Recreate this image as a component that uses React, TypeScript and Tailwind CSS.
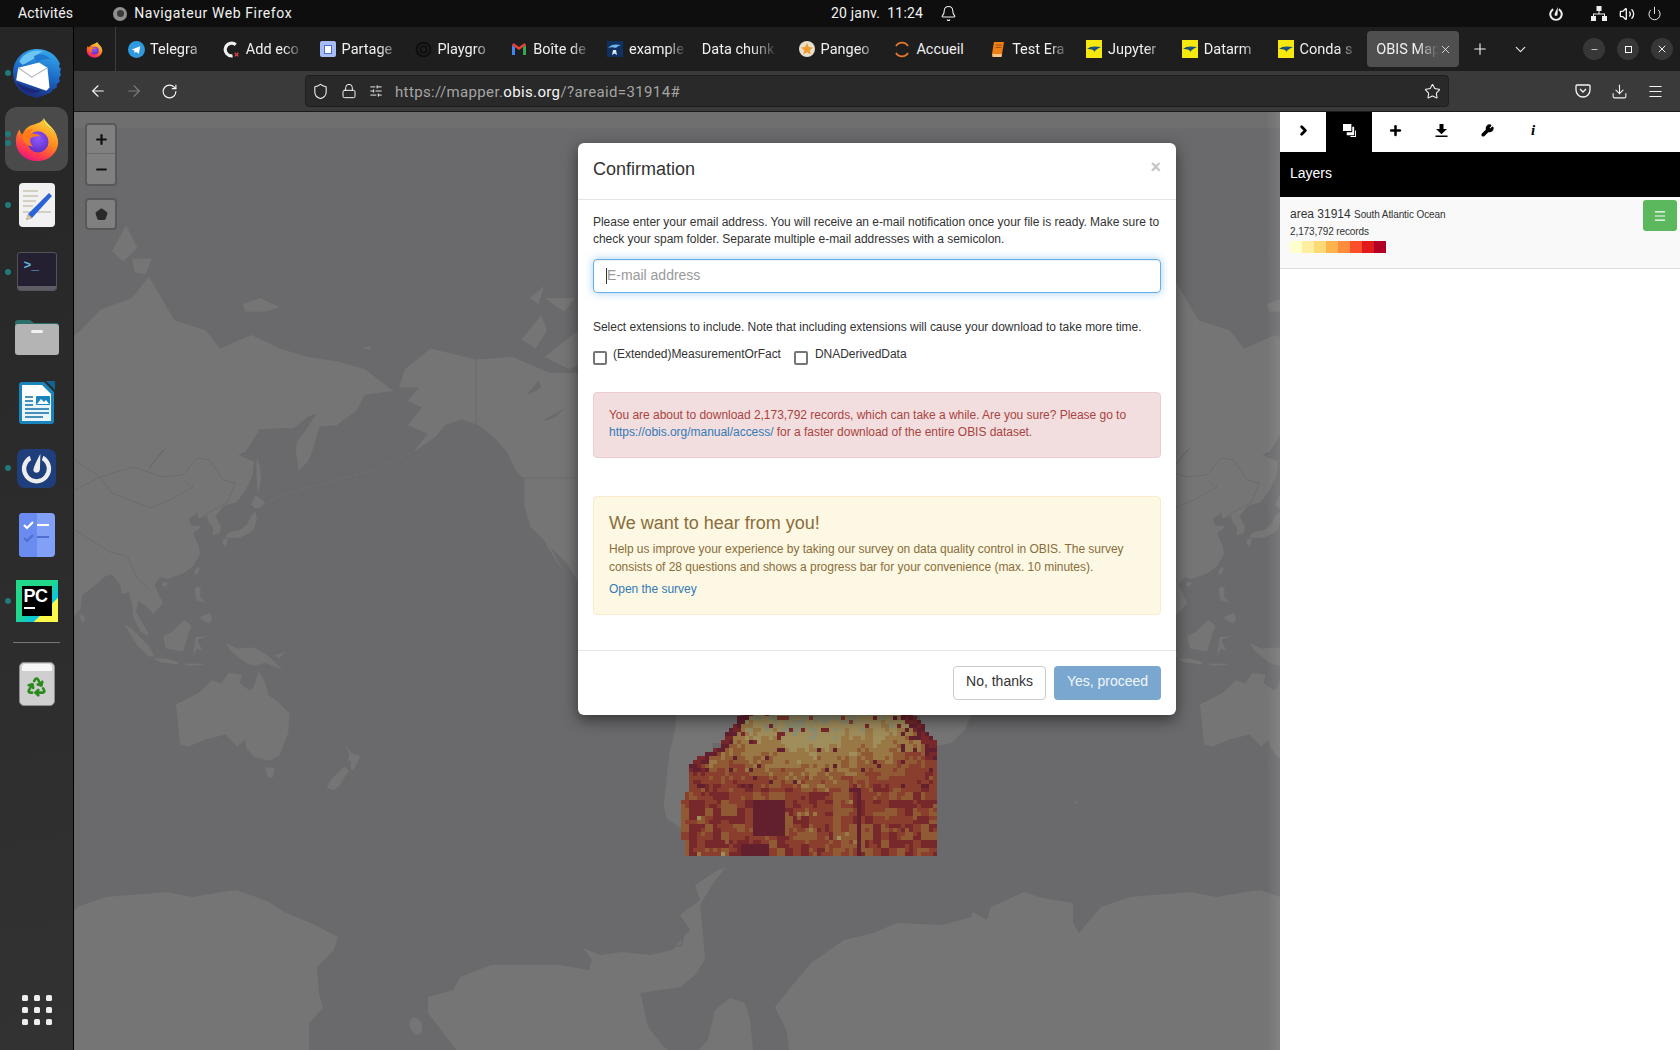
import { Bell, Minus, Plus, Power, Recycle, RotateCw, Star, Volume2, X, ChevronDown, Menu, ArrowLeft, ArrowRight, Shield, Lock, SlidersHorizontal, Download, Wrench, ChevronRight, Pentagon } from "lucide-react";
import type { ReactNode } from "react";

// Web mercator at zoom 2, fitted on the reference (Alaska border, equator)
const px = (lon: number) => 365 + (lon + 180) * (1024 / 360);
const py = (lat: number) => 640 - 163 * Math.log(Math.tan(Math.PI / 4 + (lat * Math.PI) / 360));
const geo = (pts: number[]) => {
  let d = "";
  for (let i = 0; i < pts.length; i += 2) d += `${i ? "L" : "M"}${px(pts[i]).toFixed(1)} ${py(pts[i + 1]).toFixed(1)}`;
  return d + "Z";
};
const scr = (pts: number[], close = true) => {
  let d = "";
  for (let i = 0; i < pts.length; i += 2) d += `${i ? "L" : "M"}${pts[i]} ${pts[i + 1]}`;
  return d + (close ? "Z" : "");
};

const land: number[][] = [
  // eurasia
  [40,69,60,69,68,69,67,72,72,73,74,70,76,72,80,73,87,75,98,76,104,77.7,113,74,124,73,129,71,140,72.5,150,71,160,70,170,69.5,180,68.5,190,65.5,180,65,177,62.5,170,60,164,59.8,163,58,162,56,160,53,156.7,51,155.7,55,156,57,159,59,163,62,160,61.5,155,59.5,150,59.5,143,59.3,138,55,135.5,54.5,137.5,53.8,141,53,140.5,50,138,46.5,135,43.5,132,43,130,42.3,127.5,39.8,129.4,37,129,35.2,126.5,34.5,126.5,37,125,38,124.5,40,121.5,39,121,40.8,118,39,119,37.3,122.5,37,119.5,35,121.5,31.5,122,29,119.5,25,116,22.8,110.5,21,108,21.5,106,19,109,13,107,10.5,105,8.8,105,10,102.5,12,100.5,13.5,99.5,10,103.5,3,104,1.4,101,3,98.5,8,98,13,97,16.5,94.5,16,94,19,91,22.5,88.5,21.7,86.5,20,80.5,15.5,80,11,77.5,8,76,11,73,18,72,21,69,22,66.5,25,57,25.5,50,30,45,13,35,30,30,40,40,41],
  // north america
  [-168,66,-161,66,-165,64,-160,63,-165,60,-158,58.5,-163,55,-155,58,-152,60,-146,61,-140,60,-135,58,-130,55,-127,51,-124,49,-124,43,-122,37,-117,33,-115,30,-110,23,-114.7,31,-109,26,-105,20,-96,16,-88,15,-83,10,-78,9,-83,15,-87,21,-90,21,-97,22,-97,28,-90,29,-84,30,-81,25,-80,31,-75,37,-70,42,-65,44,-60,47,-65,50,-56,52,-61,57,-65,60,-78,62,-82,68,-90,69,-100,68,-108,68,-115,68,-128,70,-141,69.7,-157,71,-166,68.5],
  // south america
  [-70,-18,-71,-30,-73,-37,-74,-44,-75,-50,-74,-53,-69,-55,-65,-55,-68,-52,-66,-47,-65,-42,-62,-39,-57,-38,-58,-34,-53,-34,-48,-26,-41,-22,-39,-14,-35,-7,-50,0,-60,8,-72,12,-78,2,-81,-5,-76,-14],
  // africa, only the south shows
  [18,-34.5,20,-35,26,-34,31,-30,33,-26,35.5,-24,40,-16,40,-10,50,10,35,30,-10,30,-17,15,9,3,12,-17],
  // australia
  [113.5,-22,114,-26,115,-34.5,118,-35,124,-33,131,-31.5,135,-35,138,-33,138.3,-35.5,141,-38,146.5,-39,150,-37.5,153,-31,153.5,-25,149,-21,146,-19,145,-15,142.6,-10.8,141,-16,139.5,-17.5,136,-15,136.7,-12,132,-11.5,129.5,-15,126,-14,122,-18,117,-20.5],
  [144.7,-40.8,148.3,-41,147.5,-43.5,146,-43.5],
  [172.7,-34.5,175.5,-37,178.4,-37.7,176,-41.5,174.9,-41.3,175,-39,174,-39,174.5,-37],
  [172.7,-40.6,174.3,-41.7,171,-45.5,169,-46.6,166.5,-46,168,-44],
  // asian islands
  [142,54,143,52,143.5,49,142.5,46,142,48,141.8,52],
  [140,43,141.5,45.4,145,43.5,143,42,141,42],
  [130.8,34,132.5,35.5,136,36,138.5,37.5,140,40,141.5,41,142,39,140.8,36,139,35,136,33.8,132,33.8],
  [130,33.5,131.8,33.5,131,31,130,32],
  [121,25,122,24.5,120.8,22,120,23],
  [109,20,111,19.7,109.5,18.2,108.6,19],
  [120.5,18.5,122.2,18,122,15,124,13,121,13.7,120,16],
  [122,8,125.5,9.5,126.3,7,125,5.8,123,7],
  [109,1.5,111.5,2.5,116.5,7,119,5,117.5,1,116,-4,110,-3],
  [95.3,5.5,98,4,104,-2,106,-5.8,104,-5.8,100,-2],
  [105.5,-6.5,110,-6.5,114.5,-7.7,114,-8.6,108,-7.8],
  [116,-8.3,119,-8.2,123,-8.3,123,-8.8,118,-9],
  [119.5,-5.5,120.5,1,125,1.5,121,0,123,-4,121,-3],
  [131,-1,135,-3,141,-2.6,146,-5.5,151,-10.5,145,-8,141,-9,138,-8,133,-4],
  [148,-5.5,152,-4.2,150,-6.3],
  [80,9.5,81.8,7.5,80.6,6,79.8,8],
  // arctic
  [91,79.5,96,81,100,79.7,95,78.8],
  [98,79,105,79,103,77.9,99,78],
  [137,75.5,143,76,150,75.2,145,74.8,138,74.8],
  [178.7,71,182,71.3,182,70.9],
  [-125,72,-118,74.5,-116,73,-120,71],
  [-117,70,-105,73,-100,70,-108,68.5],
  [-117,76,-106,76,-110,74.8],
  [-122,76,-117,77,-119,75.5],
  [-90,82,-65,83,-75,77,-88,76],
  [69,-49.5,70.5,-49,70,-49.8],
];

const lakes: number[][] = [
  [-123,65,-119,67,-118,66,-121,65.3],
  [-117,61,-110,62.8,-113,61.5,-116,60.8],
  [103.7,51.5,104.5,51.7,110,55.8,109,55.5],
];

const borders: number[][] = [
  [75,460,100,477,133,467,163,477,183,475,197,458,210,460,223,480,235,483,227,503,213,510,197,520],
  [100,477,112,493,150,508,170,500,193,487,183,480],
  [75,490,100,477],
  [75,530,110,552,127,556,137,578,150,590],
  [476,355,476,430,490,442,510,480],
  [510,478,577,478],
];

// antarctic coast, taken from the reference in screen px over one 1024 period
const antarctica = [256,897,269,902,284,912,311,923,338,937,334,950,317,967,319,993,323,1008,309,1023,309,1060,464,1060,441,1030,428,1013,428,997,453,990,460,977,491,965,529,965,560,965,589,970,592,960,583,948,600,955,622,952,650,955,672,950,690,930,680,915,700,900,695,885,718,870,725,868,712,885,700,905,703,933,705,960,745,985,811,963,844,940,873,933,897,923,942,925,971,917,973,912,987,920,991,907,1024,892,1042,898,1073,903,1073,923,1079,933,1101,907,1130,897,1191,892,1216,897,1245,892,1260,890,1280,897,1280,1060,256,1060];
const weddell = [705,960,720,955,811,963,791,987,775,1007,783,1023,787,1033,790,1060,754,1060,750,1020,745,1003,730,998,715,1010,708,1040,690,1060,664,1047,648,1027,642,1000,640,993,660,990,681,987,695,975];

const HEAT = ["#8e8e72", "#a08d5c", "#9a7846", "#905a34", "#8a3e2e", "#76282b", "#62202f"];

const hash = (a: number, b: number) => {
  const s = Math.sin(a * 12.9898 + b * 78.233) * 43758.5453;
  return s - Math.floor(s);
};

const leftEdge = (y: number) => {
  if (y < 732) return 737 - ((y - 715) * 12) / 17;
  if (y < 745) return 725 - ((y - 732) * 8) / 13;
  if (y < 755) return 717 - ((y - 745) * 19) / 10;
  if (y < 765) return 698 - (y - 755);
  if (y < 800) return 688 - ((y - 765) * 4) / 35;
  if (y < 840) return 681;
  return 685;
};
const rightEdge = (y: number) => (y < 745 ? 915 + ((y - 715) * 22) / 30 : 937);

function heatCells() {
  const cells: { x: number; y: number; c: string }[] = [];
  for (let y = 712; y < 856; y += 4) {
    const l = leftEdge(y);
    const r = rightEdge(y);
    for (let x = 677; x < 937; x += 4) {
      if (x < l || x >= r) continue;
      const t = (y - 715) / 70;
      const fine = hash(x, y);
      const block = hash(Math.floor(x / 8), Math.floor(y / 8));
      let lv: number;
      if (y < 785) {
        lv = -0.1 + t * 3.2 + Math.abs(x - 810) / 70 + (block - 0.5) * 1.1 + (fine - 0.5) * 1.2;
        if (fine > 0.94) lv += 3.5;
      } else {
        lv = 4.1 + (block - 0.5) * 2.2 + (fine - 0.5) * 0.6;
        if (fine > 0.97) lv -= 2;
        if (x > 830 && x < 850 && block > 0.35) lv -= 1;
      }
      if (y < 770 && x - l < 10) lv = 5 + fine;
      if (y < 760 && r - x < 14) lv = 5 + fine;
      if (x >= 753 && x < 783 && y >= 800 && y < 836) lv = 6;
      if (x >= 740 && x < 768 && y >= 842) lv = 5.6;
      if (x >= 857 && x < 861 && y >= 788) lv = 5.6;
      if (x >= 849 && x < 861 && y >= 788 && y < 792) lv = 5.6;
      cells.push({ x, y, c: HEAT[Math.max(0, Math.min(6, Math.round(lv)))] });
    }
  }
  return cells;
}

function WorldMap() {
  const offsets = [-1024, 0];
  const cells = heatCells();
  return (
    <svg className="absolute inset-0" width={1206} height={938} viewBox="74 112 1206 938">
      <rect x={74} y={112} width={1206} height={938} fill="#6a6a6c" />
      {offsets.map((o) => (
        <g key={o} transform={`translate(${o} 0)`}>
          {land.map((p, i) => (
            <path key={i} d={geo(p)} fill="#757575" />
          ))}
          {lakes.map((p, i) => (
            <path key={i} d={geo(p)} fill="#6a6a6c" />
          ))}
          <path d={scr(antarctica)} fill="#757575" />
          <path d={scr(weddell)} fill="#6a6a6c" />
          <ellipse cx={416} cy={1026} rx={6} ry={9} transform="rotate(-20 416 1026)" fill="#757575" />
          <path d="M 664 916 L 672 912 L 684 922 L 682 945 L 670 948 L 662 938 Z" fill="none" stroke="#6a6a6c" strokeWidth={1.4} />
        </g>
      ))}
      {[0, 1024].map((o) => (
        <g key={o} transform={`translate(${o} 0)`} fill="none">
          {borders.map((p, i) => (
            <path key={i} d={scr(p, false)} stroke="#696969" strokeWidth={0.8} />
          ))}
          <path d="M 410 453 L 372 470 L 330 482 L 290 492 L 268 502" stroke="#717171" strokeWidth={1} strokeDasharray="5 3" />
        </g>
      ))}
      <rect x={74} y={112} width={1206} height={16} fill="#6f6f6f" />
      <g shapeRendering="crispEdges">
        {cells.map((c) => (
          <rect key={`${c.x}-${c.y}`} x={c.x} y={c.y} width={4} height={4} fill={c.c} />
        ))}
      </g>
    </svg>
  );
}

function FirefoxIcon({ size }: { size: number }) {
  const id = `ff${size}`;
  return (
    <svg width={size} height={size} viewBox="0 0 48 48">
      <defs>
        <linearGradient id={`${id}a`} x1="0.75" y1="0.05" x2="0.3" y2="1">
          <stop offset="0" stopColor="#ffd53d" />
          <stop offset="0.45" stopColor="#ff8a1f" />
          <stop offset="0.8" stopColor="#ff3750" />
          <stop offset="1" stopColor="#e31587" />
        </linearGradient>
        <radialGradient id={`${id}b`} cx="0.5" cy="0.35" r="0.7">
          <stop offset="0" stopColor="#9059ff" />
          <stop offset="1" stopColor="#5b2bc4" />
        </radialGradient>
      </defs>
      <path d="M31 2c-.8 4.500 1.500 7.500 5 9.800C41 15 46 20 46 27c0 11.500-9.800 20-22 20S2 38 2 26c0-4.500 1.200-8.700 3.800-12.300C6.300 17 7.500 18.500 9 19.500 10.500 14 15 10 20 9c5-1.500 10-3 11-7z" fill={`url(#${id}a)`} />
      <circle cx="25" cy="27" r="11" fill={`url(#${id}b)`} />
      <path d="M8 20c3-5 8-7 12-6-2 1.500-3.500 3-3.500 4.500 4-.5 9 .5 12 3-4-1-8.500-.5-11.500 2-.5 3 0 6 3 8.500-6-1-10-4-12-11.500z" fill="#ff7a1a" />
      <path d="M31 2c3 6 9 9 12 15 2 4 3 8 3 10 0-7-5-12-10-15.200C32.500 9.500 30.200 6.500 31 2z" fill="#ffe14d" />
    </svg>
  );
}

function Thunderbird() {
  return (
    <svg width={50} height={50} viewBox="0 0 48 48">
      <defs>
        <linearGradient id="tb" x1="0.7" y1="0" x2="0.4" y2="1">
          <stop offset="0" stopColor="#36a9ec" />
          <stop offset="0.55" stopColor="#1a66c4" />
          <stop offset="1" stopColor="#1b2a78" />
        </linearGradient>
      </defs>
      <path d="M24 1c10 0 18 5 22 14l-1 3 2 2-1 3 1 3-2 3 1 3-3 3 0 3-4 2-2 3-5 2-8 3C10 46 1 36 1 24 1 11 11 1 24 1z" fill="url(#tb)" />
      <path d="M7 13C11 5 20 1 30 3c-4 2-7 4-9 7-3 2-8 5-11 6l-3-3z" fill="#6cc5f2" />
      <path d="M21 8c5-3 12-2 16 3-5-1-10 0-13 3z" fill="#1f78cf" />
      <path d="M6 19L26 14l8 5 2 19-3 3L4 31z" fill="#fff" />
      <path d="M6 19l13 9 15-9" fill="none" stroke="#aeb4bc" strokeWidth="1" />
      <path d="M4 33c7 4 16 7 24 8-8 4-18 2-24-8z" fill="#1e2478" />
    </svg>
  );
}

function Writer() {
  return (
    <div className="relative h-[44px] w-[36px] rounded-[4px] bg-[#f1f1f1]">
      <svg width={36} height={44} viewBox="0 0 36 44">
        <path d="M4 8h15M4 13h15M4 18h13M4 23h10M4 29h28" stroke="#c9c4b6" strokeWidth="1.600" />
        <path d="M30 10l3 3-20 22-6 2 2-6z" fill="#2a63d6" />
        <path d="M7 37l2-6 4 4z" fill="#e8c08a" />
      </svg>
    </div>
  );
}

function Terminal() {
  return (
    <div className="flex h-[39px] w-[40px] flex-col overflow-hidden rounded-[3px] border border-[#55535a] bg-[#241f31]">
      <div className="flex-1 pl-[6px] pt-[6px] font-['Liberation_Mono',monospace] text-[13px] font-bold leading-[13px] text-[#5fb8dc]">{">_"}</div>
      <div className="h-[4px] bg-[#5e5c64]" />
    </div>
  );
}

function Files() {
  return (
    <svg width={44} height={40} viewBox="0 0 44 40">
      <path d="M0 8a3 3 0 0 1 3-3h12l4 3h22a3 3 0 0 1 3 3v10H0z" fill="#2c6e6a" />
      <rect x="0" y="9" width="44" height="31" rx="3" fill="#b4b4b4" />
      <rect x="16" y="15" width="12" height="3" rx="1.500" fill="#f2f2f2" />
    </svg>
  );
}

function LoWriter() {
  return (
    <svg width={36} height={44} viewBox="0 0 36 44">
      <path d="M3 1h22l10 10v29a3 3 0 0 1-3 3H3a3 3 0 0 1-3-3V4a3 3 0 0 1 3-3z" fill="#1b84bc" />
      <path d="M3 4h20l9 9v27H3z" fill="#fff" />
      <path d="M3 20h29v20H3z" fill="#d8eef8" opacity="0.6" />
      <path d="M27 0h9v9z" fill="#10648f" />
      <rect x="17" y="15" width="14" height="9" rx="1" fill="#1b84bc" />
      <path d="M18 23l4-5 3 3 2-2 3 4z" fill="#fff" />
      <path d="M6 16h8M6 20h8M6 24h8M6 28h24M6 32h24M6 36h18" stroke="#0f6ea3" strokeWidth="1.600" />
    </svg>
  );
}

function Mattermost({ size, mono }: { size: number; mono?: boolean }) {
  return (
    <svg width={size} height={size} viewBox="0 0 40 40">
      {!mono && <rect width="40" height="40" rx="8" fill="#1f3f7c" />}
      <path d="M27 7a15 15 0 1 1-14 0l1.500 4.500a10.500 10.500 0 1 0 11 0z" fill="#ededed" />
      <path d="M24 5l-.5 16a3.500 3.500 0 0 1-6.500 1.500C15.500 19.500 24 5 24 5z" fill="#ededed" />
    </svg>
  );
}

function Tasks() {
  return (
    <div className="relative flex h-[44px] w-[36px] overflow-hidden rounded-[4px] bg-[#82a0f5]">
      <div className="w-[18px] bg-[#6a8cf0]" />
      <svg className="absolute inset-0" width={36} height={44} viewBox="0 0 36 44">
        <path d="M5 12l3 3 6-6" stroke="#fff" strokeWidth="2.200" fill="none" />
        <path d="M18 12h12" stroke="#fff" strokeWidth="2" />
        <path d="M5 25l3 3 6-6" stroke="#4f6fd0" strokeWidth="2.200" fill="none" />
        <path d="M18 24h12" stroke="#4f6fd0" strokeWidth="2" />
      </svg>
    </div>
  );
}

function PyCharm() {
  return (
    <div className="relative h-[42px] w-[42px] bg-[linear-gradient(135deg,#21d789_0%,#21d789_45%,#09c4e6_70%,#fcf84a_72%,#fcf84a_100%)] p-[6px]">
      <div className="h-[30px] w-[30px] bg-black pl-[2px] font-['Liberation_Sans',sans-serif] text-[18px] font-bold leading-[20px] tracking-[-0.5px] text-white">
        PC
        <div className="mt-[1px] h-[2px] w-[11px] bg-white" />
      </div>
    </div>
  );
}

function Trash() {
  return (
    <div className="flex h-[44px] w-[36px] flex-col items-center rounded-[5px] border border-[#8c8c8c] bg-[#cfcfcf]">
      <div className="mt-[1px] h-[7px] w-[30px] rounded-t-[3px] bg-[#f6f6f6]" />
      <Recycle className="mt-[5px] text-[#2a8a1e]" size={21} strokeWidth={3} />
    </div>
  );
}

function DockItem({ children, dots = 0, className }: { children: ReactNode; dots?: number; className: string }) {
  return (
    <div className={`relative flex items-center justify-center ${className}`}>
      {dots > 0 && (
        <div className="absolute left-[5px] top-1/2 flex -translate-y-1/2 flex-col gap-[3px]">
          {Array.from({ length: dots }).map((_, i) => (
            <span key={i} className="h-[6px] w-[6px] rounded-full bg-[#1f7a7c]" />
          ))}
        </div>
      )}
      {children}
    </div>
  );
}

function Dock() {
  return (
    <div className="flex h-full w-[74px] shrink-0 flex-col border-r border-black bg-[linear-gradient(170deg,#262626,#323232)] pt-[22px]">
      <DockItem className="h-[48px]" dots={1}>
        <Thunderbird />
      </DockItem>
      <div className="mx-[5px] mt-[10px] flex h-[64px] items-center justify-center rounded-[12px] bg-[#4a4a4a]">
        <FirefoxIcon size={46} />
      </div>
      <div className="absolute left-[5px] top-[104px] flex flex-col gap-[3px]">
        <span className="h-[6px] w-[6px] rounded-full bg-[#1f7a7c]" />
        <span className="h-[6px] w-[6px] rounded-full bg-[#1f7a7c]" />
      </div>
      <DockItem className="mt-[12px] h-[44px]" dots={1}>
        <Writer />
      </DockItem>
      <DockItem className="mt-[25px] h-[39px]" dots={1}>
        <Terminal />
      </DockItem>
      <DockItem className="mt-[24px] h-[40px]">
        <Files />
      </DockItem>
      <DockItem className="mt-[26px] h-[44px]">
        <LoWriter />
      </DockItem>
      <DockItem className="mt-[24px] h-[38px]" dots={1}>
        <Mattermost size={39} />
      </DockItem>
      <DockItem className="mt-[26px] h-[44px]">
        <Tasks />
      </DockItem>
      <DockItem className="mt-[23px] h-[42px]" dots={1}>
        <PyCharm />
      </DockItem>
      <div className="mx-[13px] mt-[20px] h-px bg-[#777]" />
      <DockItem className="mt-[19px] h-[44px]">
        <Trash />
      </DockItem>
      <div className="mx-auto mt-[289px] grid w-[30px] grid-cols-3 gap-[6px]">
        {Array.from({ length: 9 }).map((_, i) => (
          <span key={i} className="h-[6px] w-[6px] rounded-[1.5px] bg-[#eeeeee]" />
        ))}
      </div>
    </div>
  );
}

function TopBar() {
  return (
    <div className="relative flex h-[27px] shrink-0 items-center bg-[#0e0e0e] font-['Roboto',sans-serif] text-[14px] text-[#f2f2f2]">
      <span className="ml-[18px] tracking-[0.15px]">Activités</span>
      <span className="ml-[40px] flex h-[14px] w-[14px] items-center justify-center rounded-full bg-[#8f8f8f]">
        <span className="h-[7px] w-[7px] rounded-full bg-[#3a3a3a]" />
      </span>
      <span className="ml-[7px] tracking-[0.6px]">Navigateur Web Firefox</span>
      <div className="absolute left-[831px] flex items-center">
        <span className="tracking-[0.2px]">20 janv.</span>
        <span className="ml-[7px] tracking-[0.2px]">11:24</span>
        <Bell className="ml-[17px]" size={17} strokeWidth={1.5} />
      </div>
      <div className="ml-auto flex items-center">
        <Mattermost size={18} mono />
        <svg className="ml-[26px]" width={16} height={15} viewBox="0 0 16 15" fill="#efefef">
          <rect x="5.500" y="0" width="5" height="5" />
          <rect x="0" y="10" width="5" height="5" />
          <rect x="11" y="10" width="5" height="5" />
          <path d="M7.500 5h1v2.500H14V10h-1V8.500H3V10H2V7.500h5.500z" />
        </svg>
        <Volume2 className="ml-[12px]" size={16} />
        <Power className="ml-[12px] mr-[18px]" size={15} strokeWidth={1.5} />
      </div>
    </div>
  );
}

function Favicon({ kind }: { kind: string }) {
  if (kind === "telegram")
    return (
      <svg width={17} height={17} viewBox="0 0 16 16">
        <circle cx="8" cy="8" r="8" fill="#2f9ae0" />
        <path d="M3.500 8l8-3-1.300 7-2.700-2-1.300 1.300-.3-2.300z" fill="#fff" />
      </svg>
    );
  if (kind === "github")
    return (
      <svg width={17} height={17} viewBox="0 0 16 16">
        <path d="M12 3.500A6 6 0 1 0 9 14" fill="none" stroke="#f0f0f0" strokeWidth="3" />
        <path d="M11 11l3.500 3.500M14.500 11L11 14.500" stroke="#e04a3a" strokeWidth="1.200" />
      </svg>
    );
  if (kind === "partage")
    return (
      <div className="flex h-[16px] w-[16px] items-center justify-center rounded-[2px] bg-[#a8bcf5]">
        <div className="h-[9px] w-[8px] border border-[#4a6ed0] bg-white" />
      </div>
    );
  if (kind === "openai")
    return (
      <svg width={17} height={17} viewBox="0 0 16 16" fill="none" stroke="#0d0d0d">
        <circle cx="8" cy="8" r="6.500" strokeWidth="1.800" />
        <circle cx="8" cy="8" r="3" strokeWidth="1.400" />
      </svg>
    );
  if (kind === "gmail")
    return (
      <svg width={16} height={14} viewBox="0 0 16 14">
        <path d="M1 13V3l3 2v8z" fill="#4285f4" />
        <path d="M12 13V5l3-2v10z" fill="#34a853" />
        <path d="M1 3l7 5 7-5-1.500-2L8 5 2.500 1z" fill="#ea4335" />
      </svg>
    );
  if (kind === "example")
    return (
      <svg width={16} height={16} viewBox="0 0 16 16">
        <rect width="16" height="16" fill="#10305f" />
        <path d="M1 7c3-4 8-4 13-3-3 1-4 2-5 3-3-1-5-1-8 0z" fill="#6fb4e8" />
        <path d="M6 9l3 0 1 5-2.500-1.500L5 14z" fill="#dfe8f0" />
      </svg>
    );
  if (kind === "pangeo")
    return (
      <svg width={16} height={16} viewBox="0 0 16 16">
        <circle cx="8" cy="8" r="8" fill="#e6e0cf" />
        <path d="M8 2l1.800 4 4.200.4-3.200 2.800 1 4.200L8 11.200 4.200 13.400l1-4.200L2 6.400 6.200 6z" fill="#f29b2e" />
      </svg>
    );
  if (kind === "accueil")
    return (
      <svg width={16} height={17} viewBox="0 0 16 17" fill="none" stroke="#e8762c" strokeWidth="1.800">
        <path d="M2 5a7 7 0 0 1 12 0" />
        <path d="M2 12a7 7 0 0 0 12 0" />
      </svg>
    );
  if (kind === "book")
    return (
      <svg width={14} height={17} viewBox="0 0 14 17">
        <path d="M3 1h10l-2 12H1z" fill="#f07f13" />
        <path d="M1 13h10l-.4 3H1.500z" fill="#ffc38a" />
        <path d="M5 4h6M4.500 6.500h6" stroke="#a44f05" strokeWidth="1" />
      </svg>
    );
  if (kind === "jupyter")
    return (
      <svg width={16} height={18} viewBox="0 0 16 18">
        <rect width="16" height="18" fill="#f5e90f" />
        <path d="M1 9c3-3 8-3 14-2-2 1-4 2-5 3-1 0-1 2-1 2l-2-2c-2-1-4-1-6-1z" fill="#1d4f7c" />
      </svg>
    );
  return null;
}

const TABS = [
  { icon: "telegram", title: "Telegra" },
  { icon: "github", title: "Add eco" },
  { icon: "partage", title: "Partage" },
  { icon: "openai", title: "Playgro" },
  { icon: "gmail", title: "Boîte de" },
  { icon: "example", title: "example" },
  { icon: "", title: "Data chunk" },
  { icon: "pangeo", title: "Pangeo" },
  { icon: "accueil", title: "Accueil", short: true },
  { icon: "book", title: "Test Era" },
  { icon: "jupyter", title: "Jupyter" },
  { icon: "jupyter", title: "Datarm" },
  { icon: "jupyter", title: "Conda s" },
];

function TabBar() {
  return (
    <div className="flex h-[44px] shrink-0 items-center bg-[#1e1e1e] font-['Roboto',sans-serif] text-[14.5px] text-[#f0f0f2]">
      <div className="flex h-full w-[42px] items-center justify-center border-r border-[#3c3c3c]">
        <FirefoxIcon size={17} />
      </div>
      <div className="w-[4px]" />
      {TABS.map((t) => (
        <div key={t.title} className="flex h-full w-[95.8px] items-center">
          {t.icon ? (
            <div className="ml-[7px] flex w-[18px] shrink-0 justify-center">
              <Favicon kind={t.icon} />
            </div>
          ) : null}
          <span className={`overflow-hidden whitespace-nowrap pt-[2px] ${t.icon ? "ml-[5px] w-[58px]" : "ml-[7px] w-[76px]"} ${t.short ? "" : "[mask-image:linear-gradient(to_right,black_65%,transparent)]"}`}>
            {t.title}
          </span>
        </div>
      ))}
      <div className="ml-[2px] flex h-[36px] w-[92px] items-center rounded-[4px] bg-[#4f4f4f] pl-[9px]">
        <span className="w-[63px] whitespace-nowrap pt-[2px] [mask-image:linear-gradient(to_right,black_65%,transparent)]">OBIS Map</span>
        <X size={13} strokeWidth={1.5} />
      </div>
      <Plus className="ml-[12px]" size={18} strokeWidth={1.5} />
      <ChevronDown className="ml-[23px]" size={17} strokeWidth={1.5} />
      <div className="ml-auto mr-[7px] flex items-center gap-[12px]">
        <span className="flex h-[22px] w-[22px] items-center justify-center rounded-full bg-[#373737]">
          <Minus size={9} />
        </span>
        <span className="flex h-[22px] w-[22px] items-center justify-center rounded-full bg-[#373737]">
          <span className="h-[7px] w-[7px] border border-white" />
        </span>
        <span className="flex h-[22px] w-[22px] items-center justify-center rounded-full bg-[#373737]">
          <X size={12} />
        </span>
      </div>
    </div>
  );
}

function NavBar() {
  return (
    <div className="flex h-[41px] shrink-0 items-center border-b border-[#1a1a1a] bg-[#3a3a3a] text-[#f5f5f5]">
      <ArrowLeft className="ml-[15px]" size={18} strokeWidth={1.5} />
      <ArrowRight className="ml-[18px] text-[#7d7d7d]" size={18} strokeWidth={1.5} />
      <RotateCw className="ml-[18px]" size={17} strokeWidth={1.6} />
      <div className="ml-[127px] flex h-[32px] w-[1144px] items-center rounded-[4px] border border-[#1e1e1e] bg-[#292929] font-['Roboto',sans-serif] text-[15px]">
        <Shield className="ml-[6px]" size={17} strokeWidth={1.5} />
        <Lock className="ml-[12px]" size={16} strokeWidth={1.5} />
        <SlidersHorizontal className="ml-[12px]" size={14} strokeWidth={1.6} />
        <span className="ml-[12px] pt-[2px] tracking-[0.36px] text-[#a5a5a5]">
          https://mapper.<span className="text-[#f5f5f5]">obis.org</span>/?areaid=31914#
        </span>
        <Star className="ml-auto mr-[7px]" size={17} strokeWidth={1.5} />
      </div>
      <svg className="ml-[126px]" width={16} height={16} viewBox="0 0 16 16" fill="none" stroke="#f5f5f5" strokeWidth="1.300">
        <path d="M2 2h12a1 1 0 0 1 1 1v4a7 7 0 0 1-14 0V3a1 1 0 0 1 1-1z" />
        <path d="M5 6l3 3 3-3" />
      </svg>
      <Download className="ml-[20px]" size={17} strokeWidth={1.5} />
      <Menu className="ml-[19px]" size={17} strokeWidth={1.5} />
    </div>
  );
}

function MapControls() {
  return (
    <div className="absolute left-[11px] top-[11px] flex flex-col gap-[12px]">
      <div className="flex h-[63px] w-[32px] flex-col rounded-[4px] border-2 border-[#585858] bg-[#808080] text-[#111]">
        <div className="flex h-[29px] items-center justify-center border-b border-[#6a6a6a]">
          <Plus size={15} strokeWidth={3.500} />
        </div>
        <div className="flex flex-1 items-center justify-center">
          <Minus size={15} strokeWidth={3.500} />
        </div>
      </div>
      <div className="flex h-[32px] w-[32px] items-center justify-center rounded-[4px] border-2 border-[#585858] bg-[#808080]">
        <Pentagon size={13} fill="#2a2a2a" stroke="#2a2a2a" strokeWidth={2} />
      </div>
    </div>
  );
}

function ConfirmModal() {
  return (
    <div className="absolute left-[504px] top-[31px] w-[598px] rounded-[6px] bg-white font-['Liberation_Sans',sans-serif] text-[12px] leading-[17px] text-[#333] shadow-[0_5px_15px_rgba(0,0,0,0.5)]">
      <div className="relative h-[57px] border-b border-[#e5e5e5] px-[15px] pt-[13px]">
        <h4 className="text-[18px] leading-[26px]">Confirmation</h4>
        <span className="absolute right-[15px] top-[14px] text-[18px] font-bold leading-[20px] text-[#c4c4c4]">×</span>
      </div>
      <div className="px-[15px] pt-[14px] tracking-[-0.03px]">
        <p>Please enter your email address. You will receive an e-mail notification once your file is ready. Make sure to check your spam folder. Separate multiple e-mail addresses with a semicolon.</p>
        <div className="mt-[11px] flex h-[34px] items-center rounded-[4px] border border-[#66afe9] pl-[12px] text-[14px] tracking-normal text-[#999] shadow-[inset_0_1px_1px_rgba(0,0,0,0.075),0_0_8px_rgba(102,175,233,0.6)]">
          <span className="h-[16px] w-px bg-[#333]" />
          <span className="-mt-[1px]">E-mail address</span>
        </div>
        <p className="mt-[26px]">Select extensions to include. Note that including extensions will cause your download to take more time.</p>
        <div className="mt-[10px] flex h-[21px] items-start">
          <span className="mt-[5px] h-[14px] w-[14px] rounded-[2px] border-2 border-[#767676] bg-white" />
          <span className="ml-[6px]">(Extended)MeasurementOrFact</span>
          <span className="ml-[13px] mt-[5px] h-[14px] w-[14px] rounded-[2px] border-2 border-[#767676] bg-white" />
          <span className="ml-[7px]">DNADerivedData</span>
        </div>
        <div className="mt-[25px] h-[66px] rounded-[4px] border border-[#ebccd1] bg-[#f2dede] px-[15px] pt-[14px] text-[#a94442]">
          You are about to download 2,173,792 records, which can take a while. Are you sure? Please go to{" "}
          <span className="text-[#337ab7]">https://obis.org/manual/access/</span> for a faster download of the entire OBIS dataset.
        </div>
        <div className="mt-[38px] h-[119px] rounded-[4px] border border-[#faebcc] bg-[#fcf8e3] px-[15px] pt-[14px] leading-[18px] text-[#8a6d3b]">
          <h4 className="text-[18px] leading-[24px] tracking-normal">We want to hear from you!</h4>
          <p className="mt-[5px]">Help us improve your experience by taking our survey on data quality control in OBIS. The survey consists of 28 questions and shows a progress bar for your convenience (max. 10 minutes).</p>
          <p className="mt-[4px] text-[#337ab7]">Open the survey</p>
        </div>
      </div>
      <div className="mt-[35px] flex h-[65px] justify-end gap-[8px] border-t border-[#e5e5e5] px-[15px] pt-[15px] text-[14px] leading-[20px]">
        <button className="h-[34px] w-[93px] rounded-[4px] border border-[#ccc] bg-white pb-[4px] text-[#333]">No, thanks</button>
        <button className="h-[34px] w-[107px] rounded-[4px] bg-[#7aa7cf] pb-[4px] text-white/90">Yes, proceed</button>
      </div>
    </div>
  );
}

function LayersIcon() {
  return (
    <svg width={13} height={13} viewBox="0 0 14 14">
      <rect x="0" y="0" width="9" height="7.500" fill="#fff" />
      <path d="M10 3h2v9H4v-3h6z" fill="#fff" />
      <path d="M13 7h1v7H8v-1h5z" fill="#fff" />
    </svg>
  );
}

function SidePanel() {
  const swatches = ["bg-[#ffffcc]", "bg-[#ffeda0]", "bg-[#fed976]", "bg-[#feb24c]", "bg-[#fd8d3c]", "bg-[#fc4e2a]", "bg-[#e31a1c]", "bg-[#b10026]"];
  return (
    <div className="flex h-full w-[400px] shrink-0 flex-col bg-white font-['Liberation_Sans',sans-serif] text-[#333]">
      <div className="flex h-[40px] shrink-0 text-black">
        <div className="flex w-[46px] items-center justify-center pb-[4px]">
          <ChevronRight size={15} strokeWidth={4.500} />
        </div>
        <div className="flex w-[46px] items-center justify-center bg-black pb-[4px]">
          <LayersIcon />
        </div>
        <div className="flex w-[46px] items-center justify-center pb-[4px]">
          <Plus size={15} strokeWidth={4} />
        </div>
        <div className="flex w-[46px] items-center justify-center pb-[4px]">
          <svg width={13} height={13} viewBox="0 0 13 13">
            <path d="M4.500 0h4v5H12L6.500 10.200 1 5h3.500z" fill="#000" />
            <rect x="0.500" y="11.500" width="12" height="1.500" fill="#000" />
          </svg>
        </div>
        <div className="flex w-[46px] items-center justify-center pb-[4px]">
          <Wrench size={13} fill="#000" strokeWidth={2.500} />
        </div>
        <div className="flex w-[46px] items-center justify-center pb-[4px] font-['Liberation_Serif',serif] text-[15px] font-bold italic">i</div>
      </div>
      <div className="flex h-[45px] shrink-0 items-center bg-black pb-[2px] pl-[10px] text-[14px] text-white">Layers</div>
      <div className="relative h-[72px] shrink-0 border-b border-[#ddd] bg-[#f9f9f9] pl-[10px] pt-[9px]">
        <div className="text-[12px] leading-[17px]">
          area 31914 <span className="text-[10px] tracking-[-0.1px]">South Atlantic Ocean</span>
        </div>
        <div className="mt-[1px] text-[10px] leading-[15px] tracking-[-0.1px]">2,173,792 records</div>
        <div className="mt-[2px] flex">
          {swatches.map((s) => (
            <span key={s} className={`h-[12px] w-[12px] ${s}`} />
          ))}
        </div>
        <div className="absolute right-[3px] top-[3px] flex h-[31px] w-[34px] items-center justify-center rounded-[3px] bg-[#5cb85c] text-white">
          <Menu size={14} strokeWidth={2} />
        </div>
      </div>
    </div>
  );
}

export default function App() {
  return (
    <div className="relative flex h-[1050px] w-[1680px] flex-col overflow-hidden bg-[#2c2c2c]">
      <TopBar />
      <div className="relative flex min-h-0 flex-1">
        <Dock />
        <div className="flex min-w-0 flex-1 flex-col">
          <TabBar />
          <NavBar />
          <div className="flex min-h-0 flex-1">
            <div className="relative h-full w-[1206px] shrink-0 overflow-hidden">
              <WorldMap />
              <div className="absolute inset-y-0 right-0 w-[14px] bg-gradient-to-r from-transparent to-white/10" />
              <MapControls />
              <ConfirmModal />
            </div>
            <SidePanel />
          </div>
        </div>
      </div>
    </div>
  );
}
